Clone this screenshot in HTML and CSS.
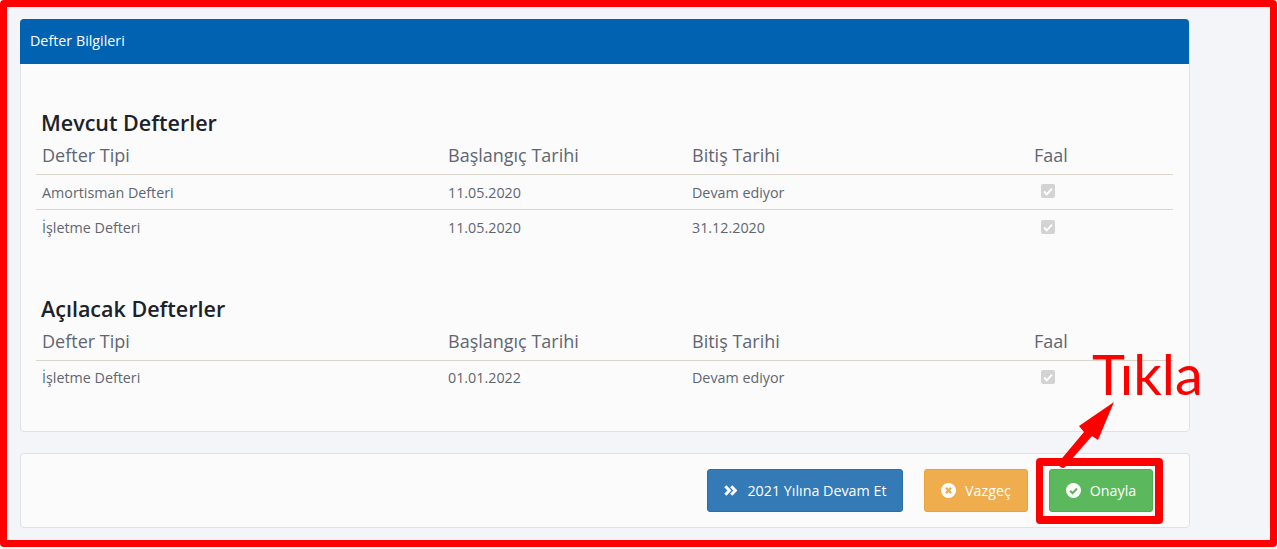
FILE: index.html
```html
<!DOCTYPE html>
<html lang="tr">
<head>
<meta charset="utf-8">
<title>Defter Bilgileri</title>
<link rel="stylesheet" href="styles.css">
</head>
<body>
<div class="frame">
  <section class="panel">
    <header class="panel-head">Defter Bilgileri</header>
    <div class="panel-body">
      <h3 class="title">Mevcut Defterler</h3>
      <table class="ledger">
        <thead><tr><th>Defter Tipi</th><th>Başlangıç Tarihi</th><th>Bitiş Tarihi</th><th>Faal</th></tr></thead>
        <tbody>
          <tr><td>Amortisman Defteri</td><td>11.05.2020</td><td>Devam ediyor</td><td><span class="check"><svg viewBox="0 0 14 14"><path d="M3 7.500l2.800 2.800L11 4.600" fill="none" stroke="#fff" stroke-width="2"/></svg></span></td></tr>
          <tr><td>İşletme Defteri</td><td>11.05.2020</td><td>31.12.2020</td><td><span class="check lower"><svg viewBox="0 0 14 14"><path d="M3 7.500l2.800 2.800L11 4.600" fill="none" stroke="#fff" stroke-width="2"/></svg></span></td></tr>
        </tbody>
      </table>
      <h3 class="title second">Açılacak Defterler</h3>
      <table class="ledger single">
        <thead><tr><th>Defter Tipi</th><th>Başlangıç Tarihi</th><th>Bitiş Tarihi</th><th>Faal</th></tr></thead>
        <tbody>
          <tr><td>İşletme Defteri</td><td>01.01.2022</td><td>Devam ediyor</td><td><span class="check"><svg viewBox="0 0 14 14"><path d="M3 7.500l2.800 2.800L11 4.600" fill="none" stroke="#fff" stroke-width="2"/></svg></span></td></tr>
        </tbody>
      </table>
    </div>
  </section>
  <section class="actions">
    <button class="btn blue"><svg class="icon" viewBox="0 0 14 14"><path d="M2.200 3l3.800 4-3.800 4M7.700 3l3.800 4-3.800 4" fill="none" stroke="#fff" stroke-width="2.800"/></svg>2021 Yılına Devam Et</button>
    <button class="btn orange"><svg class="icon" viewBox="0 0 14 14"><circle cx="7" cy="7" r="7" fill="#fff"/><path d="M4.600 4.600l4.800 4.800M9.400 4.600l-4.800 4.800" stroke="#f0ad4e" stroke-width="2.200"/></svg>Vazgeç</button>
    <button class="btn green"><svg class="icon" viewBox="0 0 14 14"><circle cx="7" cy="7" r="7" fill="#fff"/><path d="M3.800 7.200l2.300 2.300 4.200-4.300" fill="none" stroke="#5cb85c" stroke-width="2"/></svg>Onayla</button>
  </section>
  <div class="highlight"></div>
  <svg class="arrow" viewBox="1050 400 70 70"><path d="M1114 402L1079 426L1084 432L1058 463Q1059 468 1064 468L1092 436L1098 440z" fill="#f00"/></svg>
  <span class="note">Tıkla</span>
</div>
</body>
</html>
```
FILE: styles.css
```css
* { box-sizing: border-box; }
html, body { margin: 0; padding: 0; background: #fff; }
body { width: 1277px; height: 549px; overflow: hidden; font-family: "Open Sans", sans-serif; }
.frame {
  position: relative;
  width: 1277px;
  height: 547px;
  border: 7px solid #f00;
  border-radius: 4px;
  background: #f3f5f9;
  padding: 12px 0 0 13px;
}
.panel {
  width: 1170px;
  height: 413px;
  background: #fbfbfb;
  border: 1px solid #dfe1e5;
  border-radius: 4px;
}
.panel-head {
  height: 45px;
  margin: -1px 0 0 -1px;
  background: #0062b1;
  border-radius: 4px 4px 0 0;
  color: #fff;
  font-size: 14.300px;
  line-height: 44px;
  padding-left: 10px;
}
.panel-body { padding: 45px 15px 0 15px; }
.title {
  margin: 0 0 6px;
  padding-left: 5px;
  font-size: 21.500px;
  line-height: 28px;
  font-weight: 600;
  color: #1d2129;
}
.title.second { margin-top: 51px; }
.ledger { width: 1137px; border-collapse: collapse; table-layout: fixed; color: #5f6672; }
.ledger th {
  font-size: 18px;
  font-weight: 400;
  line-height: 25px;
  height: 31px;
  padding: 0 0 5px 6px;
  text-align: left;
  border-bottom: 1px solid #d9d5cb;
}
.ledger td {
  font-size: 14.300px;
  height: 35px;
  padding: 1px 0 0 6px;
  border-bottom: 1px solid #d9d5cb;
}
.ledger.single td { padding-top: 0; }
.ledger tbody tr:last-child td { border-bottom: 0; }
.ledger th:nth-child(1), .ledger td:nth-child(1) { width: 406px; }
.ledger th:nth-child(2), .ledger td:nth-child(2) { width: 244px; }
.ledger th:nth-child(3), .ledger td:nth-child(3) { width: 343px; }
.ledger td:nth-child(4) { padding-left: 12px; }
.ledger th:nth-child(4) { padding-left: 5px; }
.check {
  display: block;
  width: 14px;
  height: 14px;
  margin-bottom: 3px;
  background: #d3d3d3;
  border-radius: 2px;
}
.check.lower { margin-bottom: 1px; }
.ledger.single .check { margin-bottom: 2px; }
.check svg { display: block; width: 14px; height: 14px; }
.actions {
  display: flex;
  justify-content: flex-end;
  align-items: center;
  width: 1170px;
  height: 75px;
  margin-top: 21px;
  padding-right: 36px;
  gap: 21px;
  background: #fbfbfb;
  border: 1px solid #dfe1e5;
  border-radius: 4px;
}
.btn {
  display: flex;
  align-items: center;
  justify-content: center;
  gap: 9px;
  height: 43px;
  border-radius: 3px;
  border: 1px solid;
  color: #fff;
  font: 400 14.300px "Open Sans", sans-serif;
  padding: 0;
}
.btn .icon { width: 15px; height: 15px; flex: none; }
.blue { width: 196px; background: #337ab7; border-color: #2e6da4; }
.orange { width: 104px; background: #f0ad4e; border-color: #eea236; }
.green { width: 104px; background: #5cb85c; border-color: #4cae4c; }
.highlight {
  position: absolute;
  left: 1029px;
  top: 451px;
  width: 127px;
  height: 66px;
  border: solid #f00;
  border-width: 8px 8px 8px 7px;
  border-radius: 4px;
  box-shadow: inset 0 0 0 1px #fff;
}
.arrow { position: absolute; left: 1043px; top: 393px; width: 70px; height: 70px; }
.note {
  position: absolute;
  left: 1085px;
  top: 327px;
  font: 400 56px/80px "Lato", sans-serif;
  color: #f00;
}
```
